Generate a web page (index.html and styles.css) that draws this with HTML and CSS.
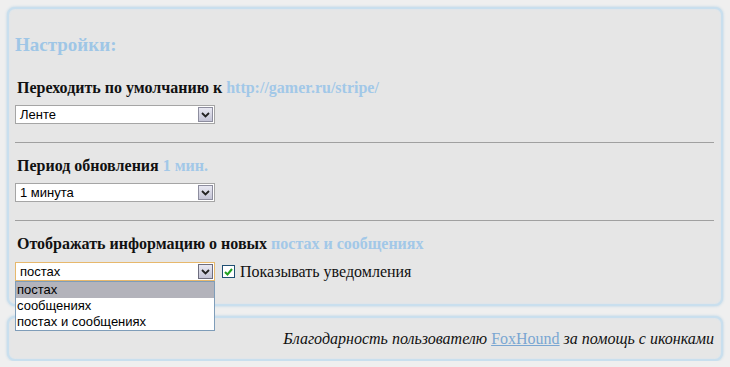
FILE: index.html
```html
<!DOCTYPE html>
<html lang="ru">
<head>
    <meta charset="UTF-8">
    <title>Настройки</title>
    <link rel="stylesheet" href="styles.css">
</head>
<body>

<div class="panel settings">
    <h1 class="title">Настройки:</h1>

    <div class="field first">
        <p class="label">Переходить по умолчанию к <span class="hint">http://gamer.ru/stripe/</span></p>
        <div class="select">
            <span class="value">Ленте</span>
            <span class="arrow"><svg width="9" height="6" viewBox="0 0 9 6"><path d="M1 1l3.5 3.5L8 1" fill="none" stroke="#222" stroke-width="1.8"/></svg></span>
        </div>
    </div>

    <hr class="line">

    <div class="field">
        <p class="label">Период обновления <span class="hint">1 мин.</span></p>
        <div class="select">
            <span class="value">1 минута</span>
            <span class="arrow"><svg width="9" height="6" viewBox="0 0 9 6"><path d="M1 1l3.5 3.5L8 1" fill="none" stroke="#222" stroke-width="1.8"/></svg></span>
        </div>
    </div>

    <hr class="line">

    <div class="field last">
        <p class="label">Отображать информацию о новых <span class="hint">постах и сообщениях</span></p>
        <div class="row">
            <div class="select open">
                <span class="value">постах</span>
                <span class="arrow"><svg width="9" height="6" viewBox="0 0 9 6"><path d="M1 1l3.5 3.5L8 1" fill="none" stroke="#222" stroke-width="1.8"/></svg></span>
                <ul class="options">
                    <li class="active">постах</li>
                    <li>сообщениях</li>
                    <li>постах и сообщениях</li>
                </ul>
            </div>
            <label class="check">
                <span class="box"><svg width="9" height="8" viewBox="0 0 9 8"><path d="M1 4l2.5 2.5L8 1" fill="none" stroke="#21a121" stroke-width="2"/></svg></span>
                Показывать уведомления
            </label>
        </div>
    </div>
</div>

<div class="panel footer">
    <p class="thanks">Благодарность пользователю <a href="#">FoxHound</a> за помощь с иконками</p>
</div>

</body>
</html>
```

FILE: styles.css
```css
body,h1,p,ul,li{ margin: 0; padding: 0;}
li{ list-style: none;}

body{
    background: #efefef;
    padding: 7px 7px 0 7px;
    font-family: "Liberation Serif", "Noto Sans CJK SC", serif;
}
.panel{
    background: #e6e6e6;
    border: 2px solid #c9dfee;
    border-radius: 8px;
    box-shadow: 0 0 3px #b5d2e6, inset 0 0 2px #d3e5f1;
}
.settings{
    padding: 26px 7px 23px 6px;
}
.title{
    font-size: 19px;
    line-height: 20px;
    color: #9fc6e6;
    font-weight: bold;
}
.field{
    padding-top: 14px;
}
.field.first{
    padding-top: 24px;
}
.label{
    font-size: 16px;
    line-height: 18px;
    font-weight: bold;
    color: #111;
    padding-left: 2px;
    margin-bottom: 8px;
}
.field.last .label{
    margin-bottom: 9px;
}
.hint{
    color: #a2c8e8;
}
.line{
    border: 0;
    border-top: 1px solid #a0a0a0;
    margin: 18px 0 0;
    height: 0;
}

.select{
    position: relative;
    width: 198px;
    height: 17px;
    background: #fff;
    border: 1px solid #a5a5a5;
    font-family: "Liberation Sans", sans-serif;
    font-size: 13px;
    line-height: 17px;
}
.select .value{
    padding-left: 4px;
}
.select .arrow{
    position: absolute;
    right: 1px;
    top: 1px;
    width: 15px;
    height: 15px;
    box-sizing: border-box;
    border: 1px solid #8d8d9e;
    background: linear-gradient(#e8e8f2, #c4c4d6);
    display: flex;
    align-items: center;
    justify-content: center;
}
.select.open{
    border-color: #e7b86c;
}
.select.open .arrow{
    border-color: #6d6d7e;
}
.options{
    position: absolute;
    left: -1px;
    top: 18px;
    width: 198px;
    background: #fff;
    border: 1px solid #7f9db9;
    z-index: 2;
}
.options li{
    height: 16px;
    line-height: 16px;
    padding-left: 1px;
    color: #000;
}
.options .active{
    background: #b3b3bb;
}

.row{
    display: flex;
    align-items: center;
}
.check{
    display: flex;
    align-items: center;
    margin-left: 7px;
    font-size: 16px;
    color: #111;
}
.check .box{
    width: 11px;
    height: 11px;
    border: 1px solid #1f4f73;
    background: #fff;
    display: flex;
    align-items: center;
    justify-content: center;
    margin-right: 5px;
}

.footer{
    margin-top: 10px;
    height: 41px;
    padding: 0 7px;
    display: flex;
    align-items: center;
    justify-content: flex-end;
}
.thanks{
    font-size: 16px;
    font-style: italic;
    color: #111;
}
.thanks a{
    font-style: normal;
    color: #7aa6d2;
    text-decoration: underline;
}
```
